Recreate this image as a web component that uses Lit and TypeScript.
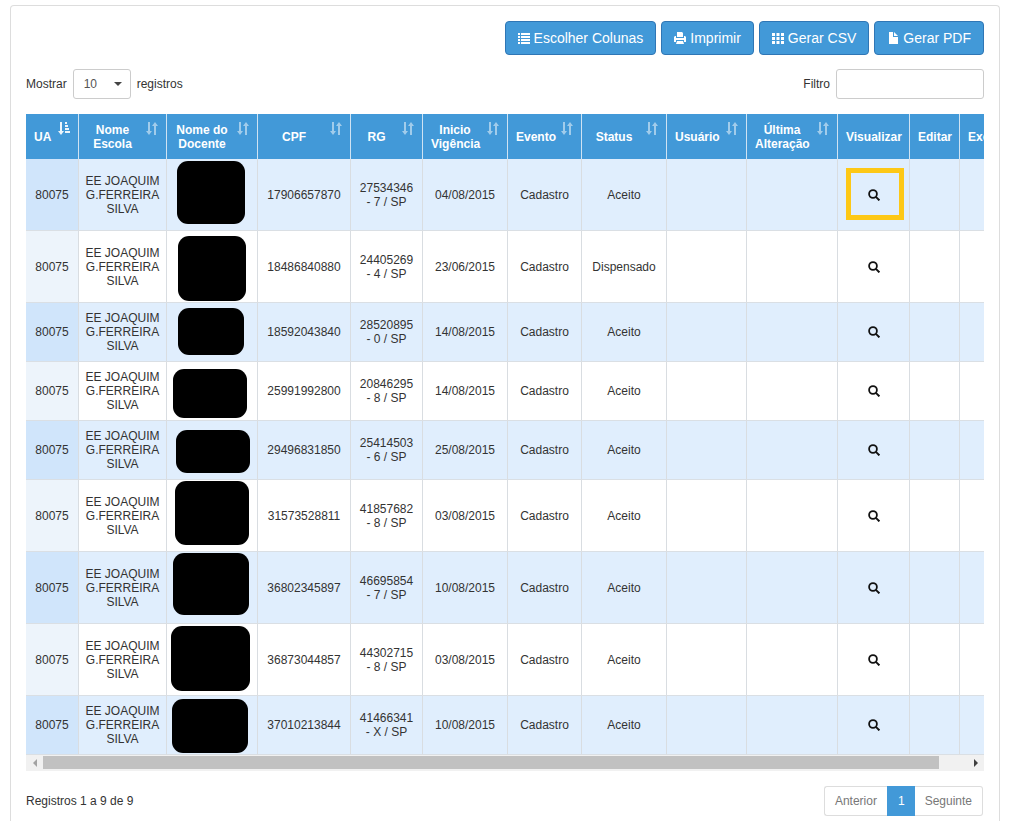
import { LitElement, html, css, svg } from "lit";
import { customElement, state } from "lit/decorators.js";
import { classMap } from "lit/directives/class-map.js";
import { styleMap } from "lit/directives/style-map.js";

interface Column {
  label: string;
  width: number;
  sort?: "none" | "asc";
}

/** Mask over a teacher's name: left, top, width, height inside the cell. */
type Mask = [number, number, number, number];

interface Row {
  cpf: string;
  rg: string;
  start: string;
  status: string;
  tall: boolean;
  mask: Mask;
}

const columns: Column[] = [
  { label: "UA", width: 53, sort: "asc" },
  { label: "Nome\nEscola", width: 88, sort: "none" },
  { label: "Nome do\nDocente", width: 91, sort: "none" },
  { label: "CPF", width: 93, sort: "none" },
  { label: "RG", width: 72, sort: "none" },
  { label: "Inicio\nVigência", width: 85, sort: "none" },
  { label: "Evento", width: 74, sort: "none" },
  { label: "Status", width: 85, sort: "none" },
  { label: "Usuário", width: 80, sort: "none" },
  { label: "Última\nAlteração", width: 91, sort: "none" },
  { label: "Visualizar", width: 72 },
  { label: "Editar", width: 50 },
  { label: "Excluir", width: 54 },
];

const rows: Row[] = [
  { cpf: "17906657870", rg: "27534346\n- 7 / SP", start: "04/08/2015", status: "Aceito", tall: true, mask: [10, 2, 68, 63] },
  { cpf: "18486840880", rg: "24405269\n- 4 / SP", start: "23/06/2015", status: "Dispensado", tall: true, mask: [11, 5, 68, 65] },
  { cpf: "18592043840", rg: "28520895\n- 0 / SP", start: "14/08/2015", status: "Aceito", tall: false, mask: [11, 5, 66, 47] },
  { cpf: "25991992800", rg: "20846295\n- 8 / SP", start: "14/08/2015", status: "Aceito", tall: false, mask: [6, 7, 74, 49] },
  { cpf: "29496831850", rg: "25414503\n- 6 / SP", start: "25/08/2015", status: "Aceito", tall: false, mask: [9, 9, 74, 43] },
  { cpf: "31573528811", rg: "41857682\n- 8 / SP", start: "03/08/2015", status: "Aceito", tall: true, mask: [8, 1, 74, 64] },
  { cpf: "36802345897", rg: "46695854\n- 7 / SP", start: "10/08/2015", status: "Aceito", tall: true, mask: [6, 1, 76, 62] },
  { cpf: "36873044857", rg: "44302715\n- 8 / SP", start: "03/08/2015", status: "Aceito", tall: true, mask: [4, 2, 79, 65] },
  { cpf: "37010213844", rg: "41466341\n- X / SP", start: "10/08/2015", status: "Aceito", tall: false, mask: [5, 3, 76, 54] },
];

const shapes = {
  list: svg`<path d="M0 1h2v2H0zM3 1h9v2H3zM0 4h2v2H0zM3 4h9v2H3zM0 7h2v2H0zM3 7h9v2H3zM0 10h2v2H0zM3 10h9v2H3z"/>`,
  print: svg`<path d="M3 0h5l1 1v4H3zM1 4h1v2h8V4h1l1 1v5h-2V8H2v2H0V5zM3 9h6l1 3H2z"/>`,
  grid: svg`<path d="M0 1h3v3H0zM4.5 1h3v3h-3zM9 1h3v3H9zM0 5h3v3H0zM4.5 5h3v3h-3zM9 5h3v3H9zM0 9h3v3H0zM4.5 9h3v3h-3zM9 9h3v3H9z"/>`,
  file: svg`<path d="M2 0h4v5h5v7H2zM7 0l4 4H7z"/>`,
  sort: svg`<path d="M2 0h2v9h2l-3 4-3-4h2zM8 13h2V4h2L9 0 6 4h2z"/>`,
  asc: svg`<path d="M2 0h2v9h2l-3 4-3-4h2zM7 0h2v2H7zM7 3h3v2H7zM7 6h4v2H7zM7 9h5v2H7z"/>`,
  search: svg`<circle cx="5" cy="5" r="3.9" fill="none" stroke="currentColor" stroke-width="1.8"/><path d="M7.3 8.5l1.2-1.2 3.6 3.4-1.4 1.4z"/>`,
};

const icon = (name: keyof typeof shapes, height = 12) => html`
  <svg class="icon" width="12" height=${height} viewBox="0 0 12 ${height}" fill="currentColor" aria-hidden="true">
    ${shapes[name]}
  </svg>
`;

@customElement("app-root")
export class AppRoot extends LitElement {
  @state() private thumb = 97;
  @state() private offset = 0;

  static styles = css`
    :host {
      display: block;
      padding: 5px 24px 0 10px;
      background: #fff;
      color: #333;
      font: 12px/14px "Liberation Sans", Arial, sans-serif;
    }
    * {
      box-sizing: border-box;
    }
    button,
    input,
    select {
      font: inherit;
      margin: 0;
    }
    .icon {
      display: block;
      flex: none;
    }
    .panel {
      min-height: calc(100vh - 5px);
      padding: 15px 15px 4px;
      border: 1px solid #ddd;
      border-bottom: 0;
      border-radius: 4px 4px 0 0;
    }
    .actions {
      display: flex;
      justify-content: flex-end;
      gap: 5px;
    }
    .action {
      display: flex;
      align-items: center;
      gap: 4px;
      height: 34px;
      padding: 0 12px;
      border: 1px solid #2f76b5;
      border-radius: 4px;
      background: #4299d8;
      color: #fff;
      font-size: 14px;
    }
    .controls,
    .footer {
      display: flex;
      justify-content: space-between;
      align-items: center;
      margin-top: 14px;
    }
    .field {
      display: flex;
      align-items: center;
      gap: 6px;
    }
    .select {
      display: grid;
      align-items: center;
    }
    .select > * {
      grid-area: 1 / 1;
    }
    .select select {
      width: 58px;
      height: 30px;
      padding: 0 10px;
      border: 1px solid #ccc;
      border-radius: 3px;
      background: #fff;
      color: #555;
      appearance: none;
    }
    .caret {
      justify-self: end;
      margin-right: 9px;
      border: 4px solid transparent;
      border-top-color: #444;
      border-bottom: 0;
      pointer-events: none;
    }
    .filter {
      width: 148px;
      height: 30px;
      padding: 5px 10px;
      border: 1px solid #ccc;
      border-radius: 3px;
    }
    .scroller {
      margin-top: 15px;
      overflow-x: auto;
      scrollbar-width: none;
    }
    .grid {
      width: 988px;
      min-width: 100%;
      table-layout: fixed;
      border-spacing: 0;
      text-align: center;
      white-space: pre-line;
    }
    th,
    td {
      position: relative;
      padding: 0 2px;
      border-right: 1px solid #d9dde1;
    }
    th {
      height: 45px;
      padding: 0 8px;
      border-color: #cfe3f3;
      background: #4299d8;
      color: #fff;
      white-space: pre;
    }
    .sortable {
      padding-right: 28px;
    }
    .sort {
      position: absolute;
      top: 8px;
      right: 8px;
      padding: 0;
      border: 0;
      background: none;
      color: #fff;
      white-space: normal;
      opacity: 0.5;
    }
    .sorted .sort {
      opacity: 0.9;
    }
    td {
      height: 59px;
      border-bottom: 1px solid #dadfe4;
    }
    .tall td {
      height: 72px;
    }
    tbody tr:nth-child(odd) {
      background: #e0eefd;
    }
    .key {
      background: #edf4fb;
    }
    tr:nth-child(odd) .key {
      background: #d0e5fb;
    }
    .mask {
      position: absolute;
      border-radius: 11px;
      background: #000;
    }
    .view {
      display: block;
      width: 12px;
      margin: 0 auto;
      color: #111;
    }
    .highlight {
      position: absolute;
      inset: 9px 5px 10px 8px;
      border: 5px solid #fdc816;
      pointer-events: none;
    }
    .scrollbar {
      display: grid;
      grid-template-columns: 17px 1fr 17px;
      height: 16px;
      background: #f1f1f1;
    }
    .step {
      display: grid;
      place-items: center;
      padding: 0;
      border: 0;
      background: none;
      color: #404040;
    }
    .step:disabled {
      color: #a3a3a3;
    }
    .thumb {
      height: 13px;
      margin-top: 1px;
      background: #c1c1c1;
    }
    .footer {
      margin-top: 15px;
    }
    .pages {
      display: flex;
      margin: 0 1px 0 0;
      padding: 0;
      list-style: none;
    }
    .page {
      display: block;
      padding: 7px 10px;
      border: 1px solid #ddd;
      border-right: 0;
      color: #777;
      text-decoration: none;
    }
    li:first-child .page {
      border-radius: 3px 0 0 3px;
    }
    li:last-child .page {
      border-right: 1px solid #ddd;
      border-left: 0;
      border-radius: 0 3px 3px 0;
    }
    .page.current {
      border-color: #4299d8;
      background: #4299d8;
      color: #fff;
    }
  `;

  private get scroller() {
    return this.renderRoot.querySelector(".scroller") as HTMLElement;
  }

  private measure = () => {
    const { clientWidth, scrollWidth, scrollLeft } = this.scroller;
    this.thumb = (clientWidth / scrollWidth) * 100;
    this.offset = (scrollLeft / scrollWidth) * 100;
  };

  connectedCallback() {
    super.connectedCallback();
    window.addEventListener("resize", this.measure);
  }

  disconnectedCallback() {
    window.removeEventListener("resize", this.measure);
    super.disconnectedCallback();
  }

  firstUpdated() {
    this.measure();
  }

  private step(distance: number) {
    this.scroller.scrollBy({ left: distance });
  }

  private renderHeader(column: Column) {
    return html`<th
      scope="col"
      class=${classMap({ sortable: !!column.sort, sorted: column.sort === "asc" })}
    >${column.label}${column.sort
        ? html`<button class="sort" aria-label="Ordenar">${icon(column.sort === "asc" ? "asc" : "sort", 13)}</button>`
        : ""}</th>`;
  }

  private renderRow(row: Row, index: number) {
    const [left, top, width, height] = row.mask;
    const place = { left: `${left}px`, top: `${top}px`, width: `${width}px`, height: `${height}px` };
    return html`<tr class=${classMap({ tall: row.tall })}>
      <td class="key">80075</td>
      <td>EE JOAQUIM<br />G.FERREIRA<br />SILVA</td>
      <td><span class="mask" style=${styleMap(place)}></span></td>
      <td>${row.cpf}</td>
      <td>${row.rg}</td>
      <td>${row.start}</td>
      <td>Cadastro</td>
      <td>${row.status}</td>
      <td></td>
      <td></td>
      <td><a class="view" href="#" aria-label="Visualizar">${icon("search")}</a>${index === 0
        ? html`<span class="highlight"></span>`
        : ""}</td>
      <td></td>
      <td></td>
    </tr>`;
  }

  render() {
    return html`
      <main class="panel">
        <div class="actions">
          <button class="action">${icon("list")}Escolher Colunas</button>
          <button class="action">${icon("print")}Imprimir</button>
          <button class="action">${icon("grid")}Gerar CSV</button>
          <button class="action">${icon("file")}Gerar PDF</button>
        </div>
        <div class="controls">
          <label class="field">
            Mostrar
            <span class="select">
              <select>
                <option>10</option>
                <option>25</option>
                <option>50</option>
                <option>100</option>
              </select>
              <span class="caret"></span>
            </span>
            registros
          </label>
          <label class="field">Filtro <input class="filter" type="search" /></label>
        </div>
        <div class="scroller" @scroll=${this.measure}>
          <table class="grid">
            <colgroup>
              ${columns.map((c) => html`<col style=${styleMap({ width: `${c.width}px` })} />`)}
            </colgroup>
            <thead>
              <tr>${columns.map((c) => this.renderHeader(c))}</tr>
            </thead>
            <tbody>
              ${rows.map((r, i) => this.renderRow(r, i))}
            </tbody>
          </table>
        </div>
        <div class="scrollbar">
          <button class="step" aria-label="Rolar para a esquerda" ?disabled=${this.offset === 0} @click=${() => this.step(-40)}>
            <svg width="4" height="8" viewBox="0 0 4 8" fill="currentColor"><path d="M4 0v8L0 4z" /></svg>
          </button>
          <div>
            <div class="thumb" style=${styleMap({ width: `${this.thumb}%`, marginLeft: `${this.offset}%` })}></div>
          </div>
          <button class="step" aria-label="Rolar para a direita" @click=${() => this.step(40)}>
            <svg width="4" height="8" viewBox="0 0 4 8" fill="currentColor"><path d="M0 0v8l4-4z" /></svg>
          </button>
        </div>
        <div class="footer">
          <span>Registros 1 a 9 de 9</span>
          <ul class="pages">
            <li><a class="page" href="#">Anterior</a></li>
            <li><a class="page current" href="#" aria-current="page">1</a></li>
            <li><a class="page" href="#">Seguinte</a></li>
          </ul>
        </div>
      </main>
    `;
  }
}
